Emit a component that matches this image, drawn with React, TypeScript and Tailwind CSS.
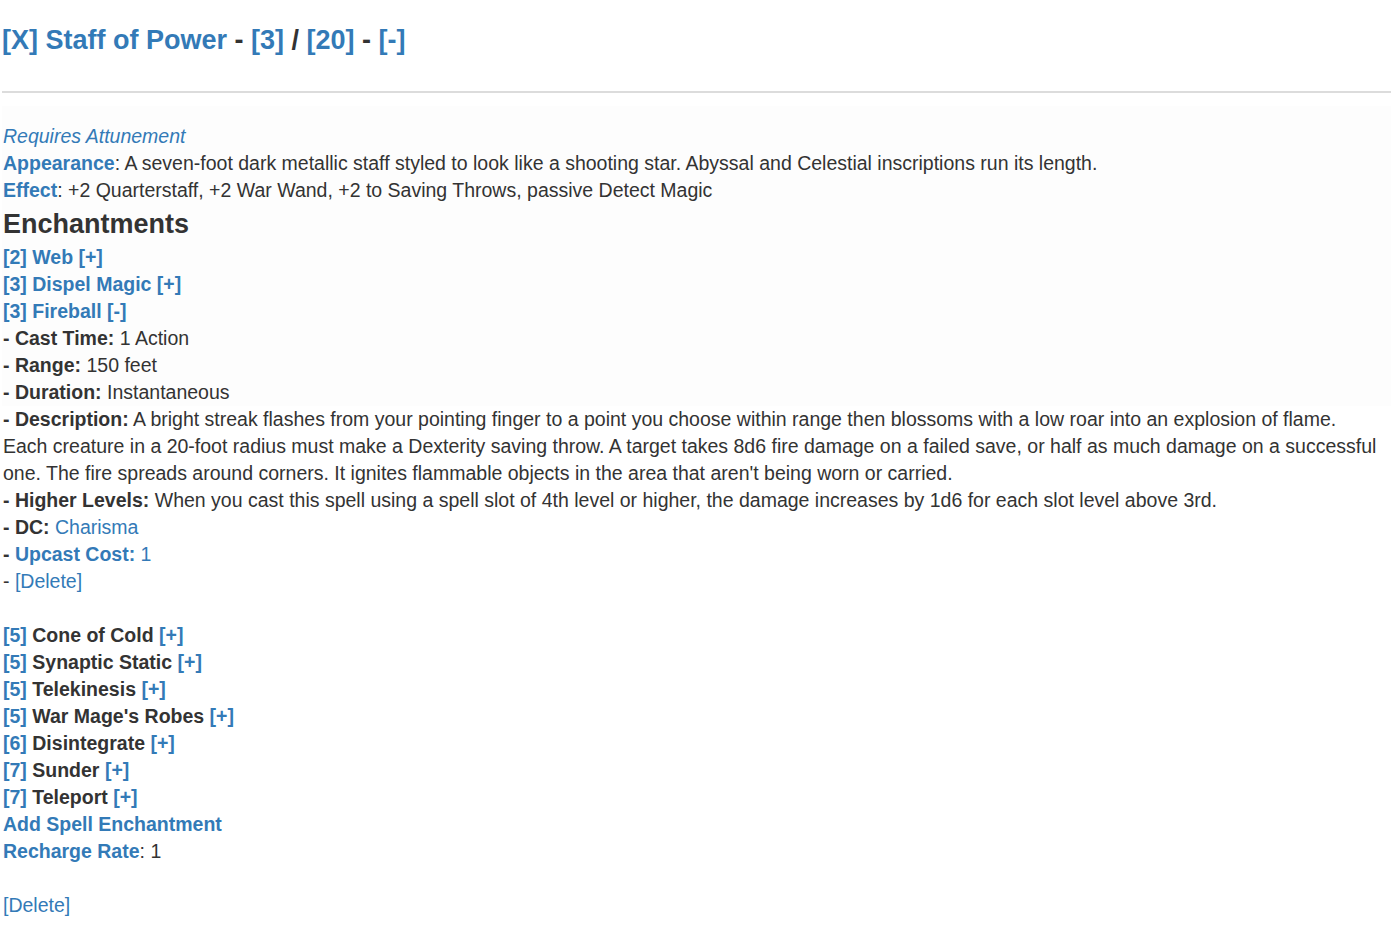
import React from 'react'

const link = 'text-[#337ab7]'

interface SpellRow {
  level: number
  name: string
}

const otherSpells: SpellRow[] = [
  { level: 5, name: 'Cone of Cold' },
  { level: 5, name: 'Synaptic Static' },
  { level: 5, name: 'Telekinesis' },
  { level: 5, name: "War Mage's Robes" },
  { level: 6, name: 'Disintegrate' },
  { level: 7, name: 'Sunder' },
  { level: 7, name: 'Teleport' },
]

function Detail({ label, children }: { label: string; children: React.ReactNode }) {
  return (
    <div>
      <b>- {label}:</b> {children}
    </div>
  )
}

export default function App() {
  return (
    <div
      className="min-h-[933px] bg-white pl-[2px] text-[#333]"
      style={{ fontFamily: '"Liberation Sans", Arial, Helvetica, sans-serif' }}
    >
      {/* Item header */}
      <h1 className="pt-[25px] text-[27px] font-bold leading-[30px]">
        <a className={link}>[X] Staff of Power</a> - <a className={link}>[3]</a> /{' '}
        <a className={link}>[20]</a> - <a className={link}>[-]</a>
      </h1>
      <hr className="mt-[36px] border-t-2 border-[#dcdcdc]" />

      {/* Item body */}
      <div className="mt-[13px] bg-[linear-gradient(to_bottom,#fdfdfd_0,#fdfdfd_300px,transparent_300px)] pt-[17px] pr-[10px] pl-px text-[19.5px] leading-[27px]">
        <div className={`${link} italic`}>Requires Attunement</div>
        <div>
          <b className={link}>Appearance</b>: A seven-foot dark metallic staff styled to look like a
          shooting star. Abyssal and Celestial inscriptions run its length.
        </div>
        <div>
          <b className={link}>Effect</b>: +2 Quarterstaff, +2 War Wand, +2 to Saving Throws, passive
          Detect Magic
        </div>

        <h2 className="my-[5px] text-[27px] font-bold leading-[30px]">Enchantments</h2>

        <div className={`${link} font-bold`}>[2] Web [+]</div>
        <div className={`${link} font-bold`}>[3] Dispel Magic [+]</div>
        <div className={`${link} font-bold`}>[3] Fireball [-]</div>
        <Detail label="Cast Time">1 Action</Detail>
        <Detail label="Range">150 feet</Detail>
        <Detail label="Duration">Instantaneous</Detail>
        <Detail label="Description">
          A bright streak flashes from your pointing finger to a point you choose within range then
          blossoms with a low roar into an explosion of flame. Each creature in a 20-foot radius must
          make a Dexterity saving throw. A target takes 8d6 fire damage on a failed save, or half as
          much damage on a successful one. The fire spreads around corners. It ignites flammable
          objects in the area that aren't being worn or carried.
        </Detail>
        <Detail label="Higher Levels">
          When you cast this spell using a spell slot of 4th level or higher, the damage increases
          by 1d6 for each slot level above 3rd.
        </Detail>
        <Detail label="DC">
          <a className={link}>Charisma</a>
        </Detail>
        <div>
          <b>- </b>
          <a className={link}>
            <b>Upcast Cost:</b> 1
          </a>
        </div>
        <div>
          - <a className={link}>[Delete]</a>
        </div>
        <div className="h-[27px]" />

        {otherSpells.map((s) => (
          <div key={s.name} className="font-bold">
            <a className={link}>[{s.level}]</a> {s.name} <a className={link}>[+]</a>
          </div>
        ))}
        <div className={`${link} font-bold`}>Add Spell Enchantment</div>
        <div>
          <b className={link}>Recharge Rate</b>: 1
        </div>
        <div className="h-[27px]" />
        <div>
          <a className={link}>[Delete]</a>
        </div>
      </div>
    </div>
  )
}
